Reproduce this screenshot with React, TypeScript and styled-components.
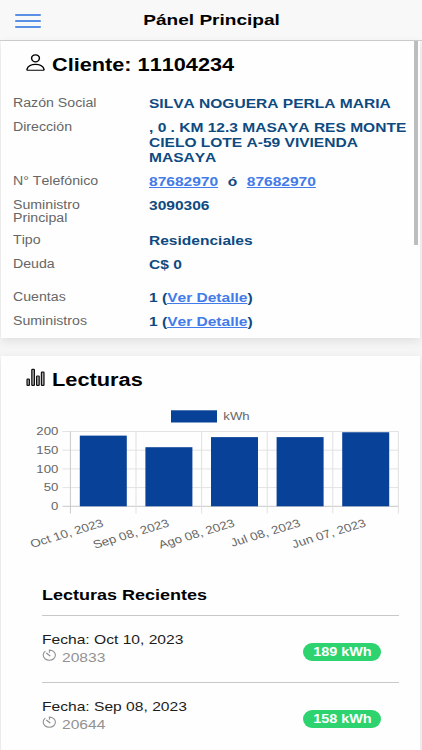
import React from "react";
import styled, { createGlobalStyle } from "styled-components";
import { IoPersonOutline } from "react-icons/io5";

const GlobalStyle = createGlobalStyle`
  * { box-sizing: border-box; }
  html, body { margin: 0; height: 100%; overflow: hidden; }
  body { font-family: "Liberation Sans", Arial, sans-serif; background: #f5f5f5; color: #000; font-kerning: none; }
`;

const Screen = styled.div`
  height: 750px;
  display: flex;
  flex-direction: column;
  overflow: hidden;
`;

const Header = styled.header`
  flex: none;
  height: 41px;
  display: grid;
  grid-template-columns: 60px 1fr 59px;
  background: #f8f8f8;
  border-bottom: 1px solid #cfcfcf;
`;

const MenuButton = styled.button`
  display: flex;
  flex-direction: column;
  gap: 4px;
  padding: 14px 0 0 14.5px;
  border: 0;
  background: none;
`;

const MenuLine = styled.span`
  width: 26.5px;
  height: 2px;
  border-radius: 1px;
  background: #5a8fe6;
`;

/* Wide lettering: the glyphs are extended horizontally from the given edge. */
const Wide = styled.span<{ $x?: number; $origin?: string }>`
  display: inline-block;
  white-space: nowrap;
  transform: scaleX(${(p) => p.$x ?? 1.2});
  transform-origin: ${(p) => p.$origin ?? "left"} center;
`;

const Title = styled.h1`
  margin: 0;
  padding-top: 10px;
  font-size: 15.5px;
  line-height: 19px;
  text-align: center;
`;

const Content = styled.main`
  position: relative;
  flex: 1;
  min-height: 0;
  display: flex;
  flex-direction: column;
  gap: 18px;
  padding: 0 2px 0 1px;
`;

const ScrollThumb = styled.div`
  position: absolute;
  top: 0;
  right: 4.5px;
  width: 3.5px;
  height: 204px;
  background: #bdbdbd;
`;

const Card = styled.section<{ $height: number }>`
  flex: none;
  height: ${(p) => p.$height}px;
  background: #fefefe;
  box-shadow: 0 3px 9px rgba(0, 0, 0, 0.09);
`;

const CardTitle = styled.h2`
  display: flex;
  align-items: center;
  gap: 7px;
  height: 35px;
  margin: 0;
  padding: 13px 0 0 25px;
  font-size: 18px;
  line-height: 22px;

  svg { flex: none; width: 19px; height: 19px; margin-bottom: 5px; }
`;

const PersonIcon = styled(IoPersonOutline)`
  transform: scaleX(1.2);
`;

const Details = styled.dl`
  margin: 0;
  padding: 20px 0 0 11.5px;
`;

const Row = styled.div<{ $height: number }>`
  display: grid;
  grid-template-columns: 136px 1fr;
  height: ${(p) => p.$height}px;
`;

const Label = styled.dt`
  padding-top: 1px;
  font-size: 12px;
  line-height: 13px;
  color: #666;
`;

const Value = styled.dd`
  margin: 0;
  font-size: 13px;
  line-height: 15px;
  font-weight: 700;
  color: #0d4a80;
`;

const Link = styled.a`
  color: #437be8;
  text-decoration: underline;
`;

const Or = styled.span`
  margin: 0 8px;
`;

const ChartSvg = styled.svg`
  display: block;
  width: 419px;
  height: 165px;
  margin-top: 9px;
`;

const Recent = styled.div`
  padding: 20px 21px 0 41px;
`;

const RecentTitle = styled.h3`
  margin: 0;
  height: 29.5px;
  font-size: 15px;
  line-height: 20px;
`;

const Reading = styled.div`
  height: 67.5px;
  display: flex;
  justify-content: space-between;
  border-top: 1px solid #c8c8c8;
  padding: 15px 18px 0 0;
`;

const ReadingDate = styled.div`
  font-size: 13px;
  line-height: 17px;
  color: #1c1c1c;
`;

const Meter = styled.div`
  display: flex;
  gap: 6px;
  font-size: 13px;
  line-height: 19px;
  color: #929292;

  svg { flex: none; width: 14px; height: 13px; margin-top: 1px; }
`;

const Badge = styled.div`
  width: 78px;
  height: 18px;
  margin-top: 12px;
  border-radius: 9px;
  background: #2dd36f;
  color: #fff;
  font-size: 12px;
  font-weight: 700;
  line-height: 18px;
  text-align: center;
`;

type Detail = { label: React.ReactNode[]; value: React.ReactNode[]; height: number };

const seeDetail = <>1 (<Link>Ver Detalle</Link>)</>;

const details: Detail[] = [
  { label: ["Razón Social"], value: ["SILVA NOGUERA PERLA MARIA"], height: 24 },
  {
    label: ["Dirección"],
    value: [", 0 . KM 12.3 MASAYA RES MONTE", "CIELO LOTE A-59 VIVIENDA", "MASAYA"],
    height: 54,
  },
  {
    label: ["N° Telefónico"],
    value: [<><Link>87682970</Link><Or>ó</Or><Link>87682970</Link></>],
    height: 24,
  },
  { label: ["Suministro", "Principal"], value: ["3090306"], height: 35 },
  { label: ["Tipo"], value: ["Residenciales"], height: 24 },
  { label: ["Deuda"], value: ["C$ 0"], height: 33 },
  { label: ["Cuentas"], value: [seeDetail], height: 24 },
  { label: ["Suministros"], value: [seeDetail], height: 24 },
];

const bars = [
  { date: "Oct 10, 2023", kwh: 189 },
  { date: "Sep 08, 2023", kwh: 158 },
  { date: "Ago 08, 2023", kwh: 185 },
  { date: "Jul 08, 2023", kwh: 185 },
  { date: "Jun 07, 2023", kwh: 198 },
];

const readings = [
  { date: "Oct 10, 2023", meter: "20833", kwh: 189 },
  { date: "Sep 08, 2023", meter: "20644", kwh: 158 },
];

function StatsIcon() {
  return (
    <svg viewBox="0 0 19 19" fill="#aaa" stroke="#111" strokeWidth="1.2">
      <rect x="1" y="11.2" width="2.4" height="6.2" rx="0.6" />
      <rect x="5.8" y="1.4" width="2.6" height="16" rx="0.6" />
      <rect x="10.6" y="8" width="2.6" height="9.4" rx="0.6" />
      <rect x="15.4" y="4.2" width="2.6" height="13.2" rx="0.6" />
    </svg>
  );
}

function TimerIcon() {
  return (
    <svg viewBox="0 0 14 13" fill="none" stroke="#929292" strokeWidth="1.1" strokeLinecap="round">
      <path d="M7.4 3.2V1.1C11 1.1 13.4 3.3 13.4 6.1S11 11.3 7.4 11.3 1.2 9 1.2 6.1C1.2 4.6 1.9 3.3 3 2.4" />
      <path d="M4.6 4.3 7.9 6.7" strokeWidth="1.4" />
    </svg>
  );
}

const LEFT = 70.4;
const STEP = 65.6;
const TOP = 431.5;
const BOTTOM = 506.3;

function Chart() {
  const y = (v: number) => BOTTOM - ((BOTTOM - TOP) * v) / 200;
  return (
    <ChartSvg viewBox="1 400 419 165" fontFamily="Liberation Sans, Arial, sans-serif" fontSize="11" fill="#666">
      <rect x="171" y="410.3" width="46" height="12.2" fill="#084298" />
      <text transform="translate(223.3 419.7) scale(1.2 1)">kWh</text>
      {[0, 50, 100, 150, 200].map((v) => (
        <g key={v}>
          <line x1="62.5" x2="398.5" y1={y(v)} y2={y(v)} stroke={v ? "#e3e3e3" : "#c8c8c8"} />
          <text textAnchor="end" transform={`translate(58.3 ${y(v) + 3.6}) scale(1.2 1)`}>{v}</text>
        </g>
      ))}
      {[0, 1, 2, 3, 4, 5].map((i) => (
        <line key={i} x1={LEFT + i * STEP} x2={LEFT + i * STEP} y1={TOP} y2="513.5" stroke={i ? "#e0e0e0" : "#cacaca"} />
      ))}
      {bars.map((b, i) => (
        <g key={b.date}>
          <rect
            x={LEFT + i * STEP + 9.4}
            y={y(b.kwh)}
            width="47"
            height={BOTTOM - y(b.kwh)}
            fill="#084298"
          />
          <text
            fontSize="11.2"
            textAnchor="end"
            transform={`translate(${LEFT + i * STEP + 34} 526) scale(1.2 1) rotate(-20)`}
          >
            {b.date}
          </text>
        </g>
      ))}
    </ChartSvg>
  );
}

const lines = (items: React.ReactNode[], stretch: number) =>
  items.map((item, i) => (
    <div key={i}>
      <Wide $x={stretch}>{item}</Wide>
    </div>
  ));

export default function App() {
  return (
    <Screen>
      <GlobalStyle />
      <Header>
        <MenuButton aria-label="Menú">
          <MenuLine />
          <MenuLine />
          <MenuLine />
        </MenuButton>
        <Title><Wide $x={1.23} $origin="center">Pánel Principal</Wide></Title>
      </Header>
      <Content>
        <Card $height={297}>
          <CardTitle>
            <PersonIcon />
            <Wide $x={1.205}>Cliente: 11104234</Wide>
          </CardTitle>
          <Details>
            {details.map((d, i) => (
              <Row key={i} $height={d.height}>
                <Label>{lines(d.label, 1.18)}</Label>
                <Value>{lines(d.value, 1.195)}</Value>
              </Row>
            ))}
          </Details>
        </Card>
        <Card $height={420}>
          <CardTitle>
            <StatsIcon />
            <Wide $x={1.21}>Lecturas</Wide>
          </CardTitle>
          <Chart />
          <Recent>
            <RecentTitle><Wide>Lecturas Recientes</Wide></RecentTitle>
            {readings.map((r) => (
              <Reading key={r.meter}>
                <div>
                  <ReadingDate><Wide>Fecha: {r.date}</Wide></ReadingDate>
                  <Meter>
                    <TimerIcon />
                    <Wide>{r.meter}</Wide>
                  </Meter>
                </div>
                <Badge><Wide $origin="center">{r.kwh} kWh</Wide></Badge>
              </Reading>
            ))}
          </Recent>
        </Card>
        <ScrollThumb />
      </Content>
    </Screen>
  );
}
